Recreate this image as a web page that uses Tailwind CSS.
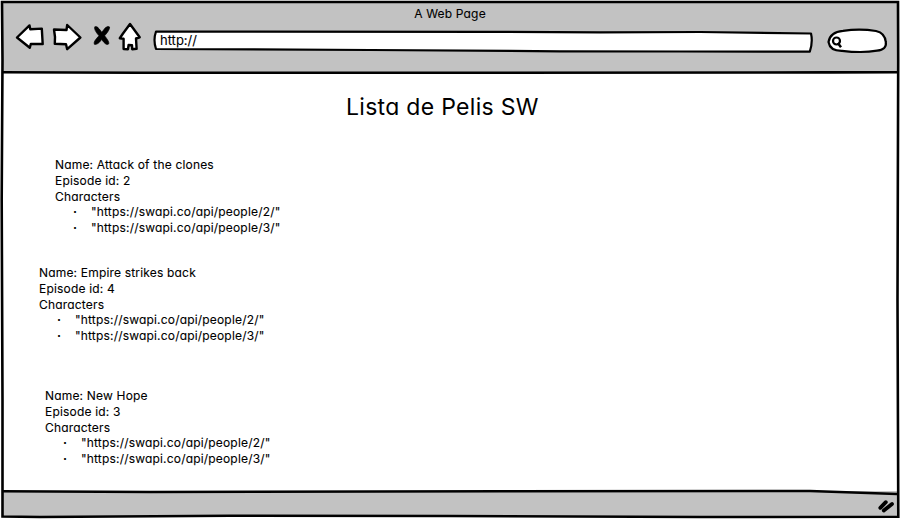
<!DOCTYPE html>
<html lang="es">
<head>
<meta charset="utf-8">
<title>A Web Page</title>
<script src="https://cdn.jsdelivr.net/npm/@tailwindcss/browser@4"></script>
</head>
<body class="bg-white">
<div class="relative flex h-[519px] w-[900px] flex-col overflow-hidden font-[Inter,'Noto_Sans',sans-serif] text-[12px] leading-4 tracking-[0.18px] text-black [-webkit-text-stroke:0.1px_#000] [font-feature-settings:'cv11'_1]">
  <header class="mx-[2px] mt-[2px] flex h-[70px] shrink-0 flex-col bg-[#c2c2c2]">
    <div class="flex h-5 items-start justify-center pt-[4px]"><span>A Web Page</span></div>
    <div class="flex items-start pl-[13px]">
      <svg class="h-[30px] w-[136px] shrink-0" viewBox="15 22 136 30" fill="#fff" stroke="#000" stroke-width="2.4" stroke-linejoin="round">
        <path d="M17 37.5 29.5 25.4 30.3 29.2 41.8 28.6 42.7 44 30.8 44 29.8 47.8Z"/>
        <path d="M54 29.5 66.5 30 67.2 25 80.4 37.5 67.2 49.2 66 44.2 54.8 43.8 55 37Z"/>
        <path d="M94.8 26.8Q97 25.8 99.3 29L101.8 32.3 105.3 27.8Q108.3 25.5 109.6 27Q109.8 30 104.6 35.8Q109.3 41.5 108.8 43.8Q106.3 46.3 101.7 39.5Q97.5 45.3 94.3 44.2Q93.2 41.5 99 35.8Q93.5 29.5 94.8 26.8Z" fill="#000" stroke="#000" stroke-width="0.7"/>
        <path d="M130 24 139.7 37.3 136 38.5 136.6 48.8 132.2 49.2 132 45.2 128.6 45 128 49.2 123.6 49 123.6 38.8 119.8 38.2 123 33.5Z"/>
      </svg>
      <div class="relative ml-[2px] mt-[7px] h-6 w-[662px]">
        <svg class="absolute inset-0 h-6 w-[662px]" viewBox="153 29 662 24" fill="#fff" stroke="#000" stroke-width="2.2" stroke-linejoin="round">
          <path d="M156 31.5 490 31.8 600 32.3 700 32 811 33.5Q813 42 809.8 51.7L680 51.5 560 51.3 510 50.8 370 50 156 49Q153 40 156 31.5Z"/>
        </svg>
        <span class="relative block pl-[7px] pt-[3px] text-[13px] tracking-normal">http://</span>
      </div>
      <svg class="ml-[12px] mt-[5px] h-7 w-[62px] shrink-0" viewBox="827 27 62 28" fill="#fff" stroke="#000" stroke-width="2.2" stroke-linejoin="round">
        <path d="M842 50.8Q830 51 828.5 42Q830 32 843 30.8Q860 28.5 876 31Q885 33 885.8 42Q887 49.5 877 50.7Q862 53.2 842 50.8Z"/>
        <circle cx="836.5" cy="41" r="3.5" stroke-width="2.2"/><path d="M837.8 43 841 47.2" stroke-width="2.5"/>
      </svg>
    </div>
  </header>
  <main class="flex h-[419px] shrink-0 flex-col">
    <h1 class="mt-[19px] pl-[346px] text-[23px] leading-8 tracking-[0.3px] [-webkit-text-stroke:0px]">Lista de Pelis SW</h1>
    <section class="mt-[34px] pl-[55px]">
      <p>Name: Attack of the clones</p><p>Episode id: 2</p><p>Characters</p>
      <ul class="-mt-px"><li class="flex pl-[18px]"><span class="w-[18px] font-bold">·</span>"https://swapi.co/api/people/2/"</li><li class="flex pl-[18px]"><span class="w-[18px] font-bold">·</span>"https://swapi.co/api/people/3/"</li></ul>
    </section>
    <section class="mt-[29px] pl-[39px]">
      <p>Name: Empire strikes back</p><p>Episode id: 4</p><p>Characters</p>
      <ul class="-mt-px"><li class="flex pl-[18px]"><span class="w-[18px] font-bold">·</span>"https://swapi.co/api/people/2/"</li><li class="flex pl-[18px]"><span class="w-[18px] font-bold">·</span>"https://swapi.co/api/people/3/"</li></ul>
    </section>
    <section class="mt-[44px] pl-[45px]">
      <p>Name: New Hope</p><p>Episode id: 3</p><p>Characters</p>
      <ul class="-mt-px"><li class="flex pl-[18px]"><span class="w-[18px] font-bold">·</span>"https://swapi.co/api/people/2/"</li><li class="flex pl-[18px]"><span class="w-[18px] font-bold">·</span>"https://swapi.co/api/people/3/"</li></ul>
    </section>
  </main>
  <footer class="mx-[2px] h-[25px] shrink-0 bg-[#c2c2c2]"></footer>
  <svg class="absolute inset-0 h-[519px] w-[900px]" viewBox="0 0 900 519" fill="none" stroke="#000" stroke-width="2.6">
    <path d="M3 490 740 489.5 898 493.5 898 495 740 493 3 493Z" fill="#fff" stroke="none"/>
    <path d="M2.5 491.5 200 492 500 491 800 491 897 494 897 516 3 516Z" fill="#c2c2c2" stroke="none"/>
    <path d="M2 2 450 2 898 2 898.2 60 897.5 300 898.3 516.8 700 517 450 516 230 515.8 40 517 2.5 516.5 2.5 400 1.7 200 2.5 60Z"/>
    <path d="M2 72.3 140 72.8 500 72.8 830 72.4 898 72.2M2.5 491.2 150 492 500 491.2 810 491 897 494"/>
    <path d="M880.3 507.8 885.8 502.2M883.8 510.6 892 504" stroke-width="3.8" stroke-linecap="round"/>
  </svg>
</div>
</body>
</html>
